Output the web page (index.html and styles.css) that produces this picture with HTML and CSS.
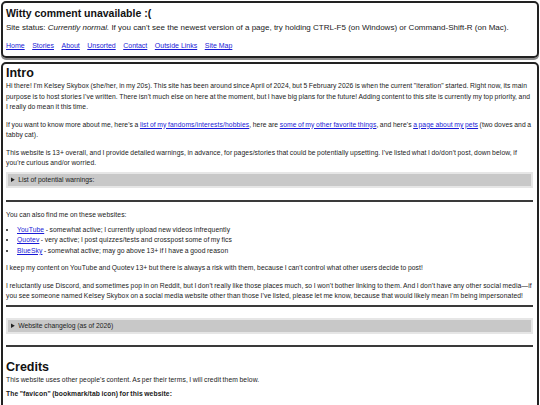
FILE: index.html
```html
<!DOCTYPE html>
<html>
<head>
<meta charset="utf-8">
<link rel="stylesheet" href="styles.css">
</head>
<body>
<header class="box header">
  <h1 class="site-title">Witty comment unavailable :(</h1>
  <p class="status">Site status: <em>Currently normal.</em> If you can't see the newest version of a page, try holding CTRL-F5 (on Windows) or Command-Shift-R (on Mac).</p>
  <nav class="nav">
    <a href="#">Home</a>
    <a href="#">Stories</a>
    <a href="#">About</a>
    <a href="#">Unsorted</a>
    <a href="#">Contact</a>
    <a href="#">Outside Links</a>
    <a href="#">Site Map</a>
  </nav>
</header>
<main class="box main">
  <h2 class="section-title">Intro</h2>
  <p class="first">Hi there! I'm Kelsey Skybox (she/her, in my 20s). This site has been around since April of 2024, but 5 February 2026 is when the current "iteration" started. Right now, its main purpose is to host stories I've written. There isn't much else on here at the moment, but I have big plans for the future! Adding content to this site is currently my top priority, and I really do mean it this time.</p>
  <p>If you want to know more about me, here's a <a href="#">list of my fandoms/interests/hobbies</a>, here are <a href="#">some of my other favorite things</a>, and here's <a href="#">a page about my pets</a> (two doves and a tabby cat).</p>
  <p>This website is 13+ overall, and I provide detailed warnings, in advance, for pages/stories that could be potentially upsetting. I've listed what I do/don't post, down below, if you're curious and/or worried.</p>
  <details class="drop drop-a"><summary>List of potential warnings:</summary></details>
  <hr class="rule rule-a">
  <p class="lead">You can also find me on these websites:</p>
  <ul class="sites">
    <li><a href="#">YouTube</a> - somewhat active; I currently upload new videos infrequently</li>
    <li><a href="#">Quotev</a> - very active; I post quizzes/tests and crosspost some of my fics</li>
    <li><a href="#">BlueSky</a> - somewhat active; may go above 13+ if I have a good reason</li>
  </ul>
  <p>I keep my content on YouTube and Quotev 13+ but there is always a risk with them, because I can't control what other users decide to post!</p>
  <p>I reluctantly use Discord, and sometimes pop in on Reddit, but I don't really like those places much, so I won't bother linking to them. And I don't have any other social media—if you see someone named Kelsey Skybox on a social media website other than those I've listed, please let me know, because that would likely mean I'm being impersonated!</p>
  <hr class="rule rule-b">
  <details class="drop drop-b"><summary>Website changelog (as of 2026)</summary></details>
  <hr class="rule rule-c">
  <h2 class="section-title credits">Credits</h2>
  <p class="first">This website uses other people's content. As per their terms, I will credit them below.</p>
  <p class="tight"><strong>The "favicon" (bookmark/tab icon) for this website:</strong></p>
</main>
</body>
</html>
```
FILE: styles.css
```css
html, body {
  margin: 0;
  padding: 0;
  background: #fff;
}
body {
  font-family: "Liberation Sans", Arial, sans-serif;
  font-size: 6.76px;
  line-height: 10.5px;
  color: #1a1a1a;
  padding: 1px;
}
a { color: #1a1ad6; }
.box {
  border: 2px solid #222;
  border-radius: 5px;
  padding: 0 4px 0 3px;
}
.header {
  box-shadow: 0 2px 0 #8a8a8a;
  padding-bottom: 5px;
}
.site-title {
  font-size: 10.5px;
  line-height: 13px;
  margin: 3.5px 0 0;
  color: #111;
}
.status {
  font-size: 8px;
  line-height: 10px;
  margin: 3.5px 0 0;
}
.nav {
  display: flex;
  gap: 7.5px;
  margin-top: 8px;
  font-size: 7px;
  line-height: 10px;
}
.main {
  margin-top: 4px;
  border-bottom-left-radius: 0;
  border-bottom-right-radius: 0;
  min-height: 400px;
}
.main p, .main li {
  letter-spacing: 0.1px;
  word-spacing: -0.5px;
}
.section-title {
  font-size: 12.5px;
  line-height: 14px;
  margin: 2px 0 0;
  color: #111;
}
p { margin: 7px 0 0; }
p.first { margin-top: 1px; }
p.lead { margin-top: 8px; }
p.tight { margin-top: 4px; }
.drop {
  background: #c8c8c8;
  border: 2px solid #e6e6e6;
  padding: 1px 3px;
  line-height: 10px;
  font-size: 6.76px;
  color: #222;
}
.drop-a { margin-top: 3px; }
.drop-b { margin-top: 11px; }
.drop summary { cursor: pointer; }
.rule {
  border: 0;
  border-top: 2px solid #3a3a3a;
  margin: 0;
}
.rule-a { margin-top: 12px; }
.rule-b { margin-top: 3px; }
.rule-c { margin-top: 11px; }
.credits { margin-top: 13px; }
.sites {
  margin: 4.5px 0 0;
  padding-left: 11px;
}
```
